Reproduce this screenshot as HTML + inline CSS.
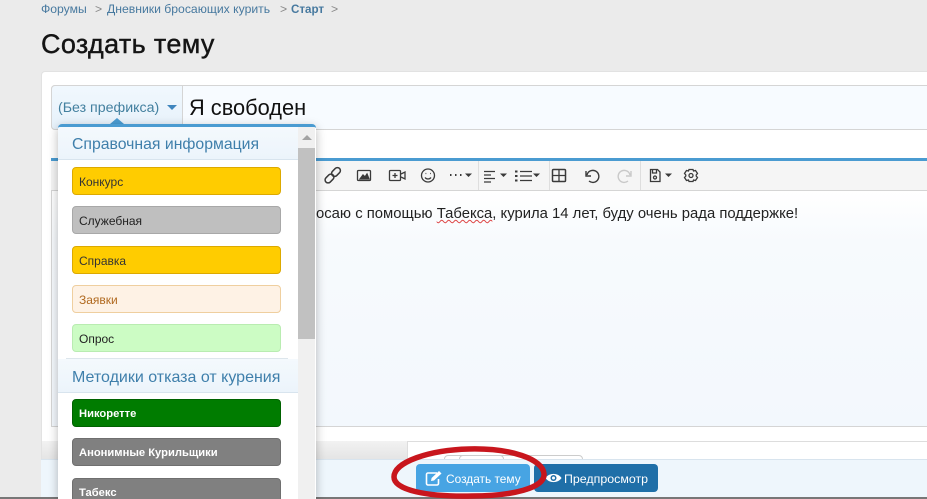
<!DOCTYPE html>
<html><head><meta charset="utf-8">
<style>
html,body{margin:0;padding:0}
body{width:927px;height:499px;position:relative;overflow:hidden;background:#ebebeb;font-family:"Liberation Sans","DejaVu Sans",sans-serif;color:#141414}
div,span{position:absolute;box-sizing:border-box;white-space:nowrap}
svg{position:absolute;overflow:visible}
.crumb{top:2px;font-size:12.2px;line-height:14px;color:#47799f}
.item{left:14px;width:209px;height:28px;border-radius:4px;border:1px solid;font-size:12px;line-height:28px;padding-left:6px}
.head{left:0;width:240px;background:linear-gradient(#f4f9fd,#ecf4fb);color:#3f7fab;font-size:15.8px;padding-left:14px;border-bottom:1px solid #d8e4ee}
.i{fill:none;stroke:#3a3a3a;stroke-width:1.3}
</style></head><body>
<div class="crumb" style="left:41px">Форумы</div>
<div class="crumb" style="left:95px;color:#888">&gt;</div>
<div class="crumb" style="left:107px">Дневники бросающих курить</div>
<div class="crumb" style="left:280px;color:#888">&gt;</div>
<div class="crumb" style="left:291px;top:3px;font-weight:bold;font-size:11.6px">Старт</div>
<div class="crumb" style="left:331px;color:#888">&gt;</div>
<div style="left:41px;top:28px;font-size:27px;line-height:32px;color:#141414;letter-spacing:.35px;-webkit-text-stroke:.4px #141414">Создать тему</div>

<div style="left:41px;top:71px;width:886px;height:389px;background:#fff;border-radius:4px 0 0 0;border:1px solid #e2e2e2;border-width:1px 0 0 1px"></div>

<div style="left:51px;top:85px;width:876px;height:45px;background:#f7fbff;border:1px solid #d5d5d5;border-right:0;border-radius:4px 0 0 4px"></div>
<div style="left:51px;top:85px;width:132px;height:45px;background:linear-gradient(#f1f8fe,#e6f1fa);border:1px solid #d5d5d5;border-radius:4px 0 0 4px"></div>
<div style="left:58px;top:99px;font-size:14.2px;line-height:18px;color:#43809f">(Без префикса)</div>
<div style="left:167px;top:105px;border:5px solid transparent;border-top:5px solid #3f85bd;border-bottom:0"></div>
<div style="left:189px;top:94px;font-size:21.8px;line-height:27px;color:#111">Я свободен</div>

<div style="left:51px;top:158px;width:876px;height:3px;background:#4a9bd1"></div>
<div style="left:51px;top:161px;width:876px;height:30px;background:#f5f5f5;border-bottom:1px solid #d5d5d5"></div>
<div style="left:51px;top:191px;width:876px;height:236px;background:linear-gradient(#fff,#f7fafd 50px,#f3f8fd);border-left:1px solid #d5d5d5;border-bottom:1px solid #d5d5d5"></div>

<svg style="left:0;top:0" width="927" height="499">
<g class="i">
<rect x="324.500" y="175.500" width="10" height="6" rx="3" transform="rotate(-45 329.500 178.500)" stroke-width="1.500"/>
<rect x="331" y="169" width="10" height="6" rx="3" transform="rotate(-45 336 172)" stroke-width="1.500"/>
<rect x="357.500" y="170.500" width="13" height="10" rx="1"/>
<path d="M360 179l3-4 2 2 2-3 2 5z" fill="#3a3a3a"/>
<rect x="389.500" y="170.500" width="11" height="10" rx="1"/>
<path d="M395 173v5M392.500 175.500h5M401 174l4-2v7l-4-2"/>
<circle cx="428" cy="175.500" r="6.500"/>
<path d="M425 177.500c1.500 2 4.500 2 6 0"/>
<path d="M425.500 173.500h.8M430 173.500h.8"/>
<path d="M484 171.500h11M484 175h7M484 178.500h11M484 182h7"/>
<path d="M520 171.500h12M520 176h12M520 180.500h12" />
<path d="M515 171.500h2.500M515 176h2.500M515 180.500h2.500" stroke-width="2"/>
<rect x="552.500" y="169.500" width="13" height="12" rx="1" stroke-width="1.500"/>
<path d="M559 170v11M553 175.500h12"/>
<path d="M586 171v5h5" stroke-width="1.400"/>
<path d="M587 175a6 6 0 1 1 2 6" stroke-width="1.400"/>
<path d="M631 171v5h-5M630 175a6 6 0 1 0-2 6" stroke="#c9c9c9" stroke-width="1.400"/>
<path d="M650.500 169.500h7l2.500 2.500v9.500h-9.500z"/>
<path d="M652.500 170v3h4v-3"/>
<circle cx="655" cy="177.500" r="1.500"/>
<circle cx="691" cy="175.500" r="2"/>
<path d="M689 169.500h4l.5 1.500 2-.5 2 3-1.300 1.500 0 1 1.300 1.500-2 3-2-.5-.5 1.500h-4l-.5-1.500-2 .5-2-3 1.300-1.500 0-1-1.300-1.500 2-3 2 .5z"/>
</g>
<path d="M450 175h1.500M455 175h1.500M460 175h1.500" stroke="#3a3a3a" stroke-width="2"/>
<path d="M465 173.500h7l-3.500 3.500zM500 173.500h7l-3.500 3.500zM533 173.500h7l-3.500 3.500zM665 173.500h7l-3.500 3.500z" fill="#3a3a3a"/>
<path d="M478.500 161v29M549.500 161v29M640.500 161v29" stroke="#dedede"/>
</svg>

<div style="left:316px;top:205px;font-size:14.85px;line-height:18px;color:#222">осаю с помощью <span style="position:static;text-decoration:underline wavy #d44;text-decoration-thickness:1px">Табекса</span>, курила 14 лет, буду очень рада поддержке!</div>

<div style="left:42px;top:441px;width:365px;height:19px;background:linear-gradient(#f2f2f2,#e4e4e4)"></div>
<div style="left:407px;top:441px;width:520px;height:19px;background:#fff;border-top:1px solid #ddd;border-left:1px solid #ddd"></div>
<div style="left:444px;top:455px;width:60px;height:6px;border:1px solid #ccc;border-radius:4px 4px 0 0"></div>
<div style="left:459px;top:455px;width:124px;height:6px;border:1px solid #ccc;border-radius:4px 4px 0 0"></div>
<div style="left:41px;top:459px;width:886px;height:38px;background:#eef6fc;border-top:1px solid #d8e4ee"></div>
<div style="left:0;top:497px;width:927px;height:2px;background:#777"></div>

<div style="left:416px;top:464px;width:114px;height:28px;background:#47a4e3;border-radius:4px"></div>
<svg style="left:425px;top:470px" width="18" height="16"><path d="M12 3H3a1.500 1.500 0 0 0-1.500 1.500v9A1.500 1.500 0 0 0 3 15h9a1.500 1.500 0 0 0 1.500-1.500V9" fill="none" stroke="#fff" stroke-width="1.600"/><path d="M6 11l.6-3L14 1l2.500 2.500L9 10.500z" fill="#fff"/></svg>
<div style="left:446px;top:472px;font-size:11.9px;line-height:15px;color:#fff">Создать тему</div>
<div style="left:534px;top:464px;width:124px;height:28px;background:#1f6fa8;border-radius:4px"></div>
<svg style="left:545px;top:472px" width="17" height="12"><path d="M.5 6C4 .5 13 .5 16.500 6 13 11.500 4 11.500 .5 6z" fill="#fff"/><circle cx="8.500" cy="6" r="3" fill="#1f6fa8"/><circle cx="8.500" cy="6" r="1.500" fill="#fff"/></svg>
<div style="left:564px;top:472px;font-size:12.4px;line-height:15px;color:#fff">Предпросмотр</div>

<svg style="left:0;top:0" width="927" height="499"><path d="M394 477c0-15 35-27 75-28 42-1 74 10 75 25 1 14-32 22-72 22-45 1-78-6-78-19z" fill="none" stroke="#c8161d" stroke-width="5.500"/></svg>

<div style="left:110px;top:118px;border:7px solid transparent;border-bottom:6px solid #4a9bd1;border-top:0"></div>
<div style="left:58px;top:124px;width:258px;height:375px;background:#fff;border-top:3px solid #4a9bd1;border-radius:4px 4px 0 0;box-shadow:0 3px 10px rgba(0,0,0,.28);overflow:hidden">
  <div class="head" style="top:0;height:33px;line-height:36px">Справочная информация</div>
  <div style="left:240px;top:0;width:17px;height:372px;background:#f0f0f0"></div>
  <div style="left:240px;top:21px;width:17px;height:191px;background:#c1c1c1"></div>
  <div style="left:244px;top:8px;border:5px solid transparent;border-bottom:5px solid #a3a3a3;border-top:0"></div>
  <div class="item" style="top:40px;background:#fc0;border-color:#dca900;color:#333">Конкурс</div>
  <div class="item" style="top:79px;background:#bfbfbf;border-color:#a8a8a8;color:#222">Служебная</div>
  <div class="item" style="top:119px;background:#fc0;border-color:#dca900;color:#333">Справка</div>
  <div class="item" style="top:158px;background:#fef2e5;border-color:#efcf9f;color:#b0691f">Заявки</div>
  <div class="item" style="top:197px;background:#ccfcc4;border-color:#b9ecb1;color:#222">Опрос</div>
  <div style="left:8px;top:231px;width:222px;height:1px;background:#dde6ec"></div>
  <div class="head" style="top:232px;height:34px;line-height:37px;font-size:16px">Методики отказа от курения</div>
  <div class="item" style="top:272px;background:#007c00;border-color:#006200;color:#fff;font-weight:bold;font-size:11.2px">Никоретте</div>
  <div class="item" style="top:311px;background:#808080;border-color:#6f6f6f;color:#fff;font-weight:bold;font-size:11.2px">Анонимные Курильщики</div>
  <div class="item" style="top:351px;background:#808080;border-color:#6f6f6f;color:#fff;font-weight:bold;font-size:11.2px">Табекс</div>
</div>
</body></html>
